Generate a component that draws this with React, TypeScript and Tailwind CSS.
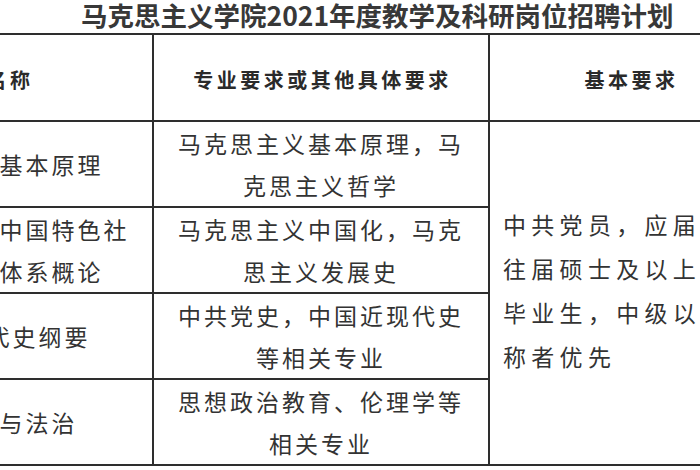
const cjk = { fontFamily: '"Noto Sans CJK SC", "Noto Sans", sans-serif' };

const rows = [
  { name: ['马克思主义基本原理'], req: '马克思主义基本原理，马克思主义哲学' },
  { name: ['毛泽东思想和中国特色社', '会主义理论体系概论'], req: '马克思主义中国化，马克思主义发展史' },
  { name: ['中国近现代史纲要'], req: '中共党史，中国近现代史等相关专业' },
  { name: ['思想道德与法治'], req: '思想政治教育、伦理学等相关专业' },
];

const basic = ['中共党员，应届或', '往届硕士及以上学历', '毕业生，中级以上职', '称者优先'];

export default function App() {
  return (
    <div className="w-[700px] h-[470px] overflow-hidden bg-white text-[#333]" style={cjk}>
      {/* 标题 */}
      <div className="h-[33px] pl-[81px] flex items-start">
        <h1 className="text-[26.5px] leading-[30px] font-bold text-[#383838] whitespace-nowrap">
          马克思主义学院2021年度教学及科研岗位招聘计划
        </h1>
      </div>

      {/* 表格 */}
      <div className="ml-[-184px] w-max grid grid-cols-[336px_336px_282px] grid-rows-[87px_86px_86px_86px_86px] border-t-2 border-l-2 border-[#2e2e2e]">
        <div className="border-r-2 border-b-2 border-[#2e2e2e] flex items-center justify-center pt-1 pl-[3px] text-[20px] font-bold tracking-[3.5px] text-[#2a2a2a]">
          学科名称
        </div>
        <div className="border-r-2 border-b-2 border-[#2e2e2e] flex items-center justify-center pt-1 pl-[3px] text-[20px] font-bold tracking-[3.5px] text-[#2a2a2a]">
          专业要求或其他具体要求
        </div>
        <div className="border-r-2 border-b-2 border-[#2e2e2e] flex items-center justify-center pt-1 pl-[3px] text-[20px] font-bold tracking-[3.5px] text-[#2a2a2a]">
          基本要求
        </div>

        {rows.map((r, i) => (
          <div key={i} className="contents">
            <div className="border-r-2 border-b-2 border-[#2e2e2e] flex flex-col items-center justify-center pl-[3px] text-[23px] leading-[42px] tracking-[3px] whitespace-nowrap">
              {r.name.map((l) => (
                <span key={l}>{l}</span>
              ))}
            </div>
            <div className="border-r-2 border-b-2 border-[#2e2e2e] flex items-center justify-center px-[16px] text-center text-[23px] leading-[42px] tracking-[3px]">
              {r.req}
            </div>
            {i === 0 && (
              <div className="row-span-4 border-r-2 border-b-2 border-[#2e2e2e] flex flex-col justify-center pl-[13px] pb-[6px] text-[23px] leading-[44px] tracking-[5.3px] whitespace-nowrap overflow-hidden">
                {basic.map((l) => (
                  <span key={l}>{l}</span>
                ))}
              </div>
            )}
          </div>
        ))}
      </div>
    </div>
  );
}
